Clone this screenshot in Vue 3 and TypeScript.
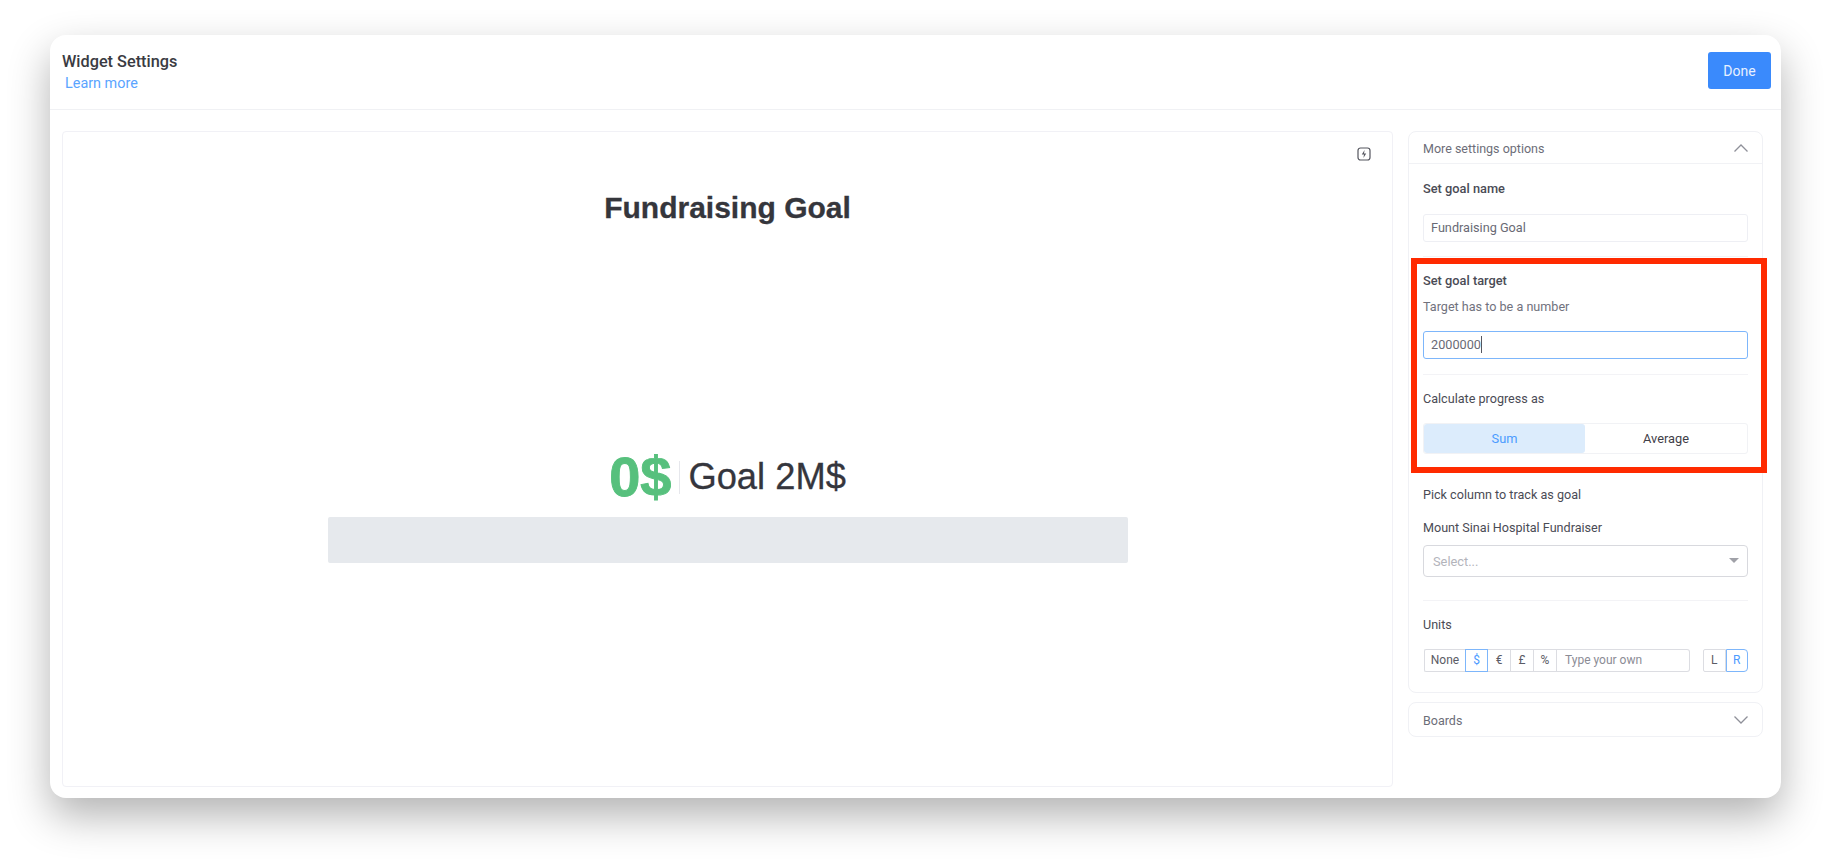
<script setup lang="ts">
const units = ['None', '$', '€', '£', '%']
</script>

<template>
  <div class="page">
    <div class="card">
      <header class="head">
        <div>
          <div class="title">Widget Settings</div>
          <a class="learn">Learn more</a>
        </div>
        <button class="done">Done</button>
      </header>
      <div class="body">
        <section class="canvas">
          <svg class="bolt" viewBox="0 0 14 14" width="14" height="14" fill="none">
            <rect x="1" y="1" width="12" height="12" rx="2.5" stroke="#55565f" stroke-width="1.2" />
            <path d="M7.6 3 4.8 7.4H7L6.4 11l2.800-4.400H7Z" fill="#55565f" />
          </svg>
          <h1 class="goal-name">Fundraising Goal</h1>
          <div class="numbers">
            <span class="current">0$</span>
            <span class="sep"></span>
            <span class="target">Goal 2M$</span>
          </div>
          <div class="bar"></div>
        </section>
        <aside class="side">
          <div class="panel open">
            <div class="panel-head">
              <span class="ph-text">More settings options</span>
              <svg class="chev" viewBox="0 0 16 10" width="16" height="10" fill="none"><path d="M1.5 8.5 8 2l6.500 6.500" stroke="#8f9099" stroke-width="1.300" /></svg>
            </div>
            <div class="panel-body">
              <div class="label first">Set goal name</div>
              <div class="field name">Fundraising Goal</div>
              <hr class="rule r1" />
              <div class="label l2">Set goal target</div>
              <div class="hint">Target has to be a number</div>
              <div class="field focus">2000000<i class="caret"></i></div>
              <hr class="rule r2" />
              <div class="label l3">Calculate progress as</div>
              <div class="toggle">
                <span class="on">Sum</span>
                <span>Average</span>
              </div>
              <div class="label l4">Pick column to track as goal</div>
              <div class="label l5">Mount Sinai Hospital Fundraiser</div>
              <div class="select">
                <span>Select...</span>
                <i class="tri"></i>
              </div>
              <hr class="rule r3" />
              <div class="label l6">Units</div>
              <div class="units">
                <div class="seg">
                  <span v-for="u in units" :key="u" class="u" :class="{ none: u === 'None', sel: u === '$' }">{{ u }}</span>
                  <span class="own">Type your own</span>
                </div>
                <div class="seg lr">
                  <span class="u">L</span>
                  <span class="u sel">R</span>
                </div>
              </div>
            </div>
            <div class="redbox"></div>
          </div>
          <div class="panel boards">
            <div class="panel-head plain">
              <span class="ph-text">Boards</span>
              <svg class="chev" viewBox="0 0 16 10" width="16" height="10" fill="none"><path d="M1.500 1.500 8 8l6.500-6.500" stroke="#8f9099" stroke-width="1.300" /></svg>
            </div>
          </div>
        </aside>
      </div>
    </div>
  </div>
</template>

<style>
html, body { margin: 0; background: #fff; }
</style>

<style scoped>
.page {
  width: 1831px;
  height: 863px;
  padding: 35px 50px 65px;
  box-sizing: border-box;
  overflow: hidden;
  font-family: Roboto, "Liberation Sans", sans-serif;
  color: #3f4048;
}
.card {
  height: 763px;
  background: #fff;
  border-radius: 16px;
  box-shadow: 0 18px 42px rgba(0, 0, 0, 0.3);
  display: flex;
  flex-direction: column;
}
.head {
  flex: none;
  border-bottom: 1px solid #f0f1f4;
  display: flex;
  justify-content: space-between;
  padding: 17px 10px 0 12px;
  height: 57px;
}
.title { font-size: 16.300px; font-weight: 500; line-height: 20px; color: #3a3b42; }
.learn { display: block; margin: 2px 0 0 3px; font-size: 14.400px; line-height: 20px; color: #5aa4ff; }
.done {
  width: 63px;
  height: 37px;
  border: none;
  border-radius: 3px;
  background: #3a8afc;
  color: #e8f1ff;
  font: 400 14px Roboto, sans-serif;
}
.body { flex: 1; display: flex; padding: 21px 18px 11px 12px; gap: 15px; }
.canvas {
  position: relative;
  width: 1331px;
  box-sizing: border-box;
  border: 1px solid #f1f1f6;
  border-radius: 4px;
  display: flex;
  flex-direction: column;
  align-items: center;
}
.bolt { position: absolute; top: 15px; right: 21px; }
.goal-name {
  margin: 59px 0 0;
  font: 700 30px/34px "Liberation Sans", Arial, sans-serif;
  color: #35363c;
  -webkit-text-stroke: 0.3px #35363c;
}
.numbers {
  margin-top: 222px;
  height: 60px;
  display: flex;
  align-items: center;
}
.current { font: 700 56px/60px "Liberation Sans", sans-serif; color: #57c07d; -webkit-text-stroke: 0.9px #57c07d; }
.sep { width: 1px; height: 33px; background: #e6e7ec; margin: 0 8px; }
.target { font: 400 36.300px/60px "Liberation Sans", sans-serif; color: #35363d; -webkit-text-stroke: 0.3px #35363d; }
.bar {
  width: 800px;
  height: 46px;
  margin-top: 10px;
  background: #e6e9ed;
  border-radius: 2px;
}
.side { width: 355px; display: flex; flex-direction: column; gap: 9px; }
.panel {
  position: relative;
  border: 1px solid #f0f1f5;
  border-radius: 8px;
  box-sizing: border-box;
}
.open { height: 562px; }
.boards { height: 35px; }
.panel-head {
  height: 32px;
  border-bottom: 1px solid #f1f2f5;
  box-sizing: border-box;
  padding: 0 13px 0 14px;
  display: flex;
  align-items: center;
  justify-content: space-between;
  font-size: 12.500px;
  color: #6c6d78;
}
.ph-text { margin-top: 2px; }
.panel-head.plain { border: none; height: 33px; }
.panel-body { padding: 0 14px; }
.label { font-size: 12.600px; line-height: 16px; color: #4a4b55; }
.label.first { margin-top: 17px; font-size: 12.800px; font-weight: 500; }
.l2 { margin-top: 16px; font-size: 12.800px; font-weight: 500; }
.hint { margin-top: 10px; font-size: 12.600px; line-height: 16px; color: #71727d; }
.field {
  box-sizing: border-box;
  height: 28px;
  border: 1px solid #eeeff4;
  border-radius: 3px;
  padding: 0 7px;
  font-size: 12.700px;
  line-height: 26px;
  color: #696a75;
}
.name { margin-top: 17px; }
.rule { border: none; border-top: 1px solid #f3f3f6; margin: 0; }
.r1 { margin-top: 14px; }
.focus { margin-top: 16px; height: 28px; border: 1.500px solid #7db6fb; }
.caret { display: inline-block; width: 1px; height: 17px; background: #55565f; vertical-align: -4px; }
.r2 { margin-top: 15px; }
.l3 { margin-top: 16px; }
.toggle {
  display: flex;
  margin-top: 16px;
  height: 31px;
  border: 1px solid #f1f2f5;
  border-radius: 3px;
  box-sizing: border-box;
  font-size: 12.800px;
  line-height: 29px;
  text-align: center;
}
.toggle span { flex: 1; }
.toggle .on { flex: 0 0 161px; background: #dcecfc; color: #4b9bff; border-radius: 3px; }
.l4 { margin-top: 33px; }
.l5 { margin-top: 17px; }
.select {
  margin-top: 9px;
  height: 32px;
  box-sizing: border-box;
  border: 1px solid #d8d9de;
  border-radius: 4px;
  padding: 0 8px 0 9px;
  display: flex;
  align-items: center;
  justify-content: space-between;
  font-size: 12.800px;
  color: #b3b4bb;
}
.tri { width: 0; height: 0; border: 5px solid transparent; border-top: 5px solid #a0a1a8; border-bottom: none; margin-top: -2px; }
.r3 { margin-top: 23px; }
.l6 { margin-top: 16px; }
.units { display: flex; justify-content: space-between; margin-top: 16px; padding-left: 1px; }
.seg { display: flex; height: 23px; font-size: 12px; color: #5b5c66; }
.seg .u {
  width: 23px;
  box-sizing: border-box;
  text-align: center;
  line-height: 21px;
  border: 1px solid #dcdde2;
  border-left-width: 0;
}
.seg .u:first-child { border-left-width: 1px; border-radius: 2px 0 0 2px; }
.seg .none { width: 41px; border-right: none; }
.seg .sel { border: 1.500px solid #7db6fb; color: #4b9bff; line-height: 20px; }
.own {
  width: 133px;
  box-sizing: border-box;
  border: 1px solid #dcdde2;
  border-left: none;
  border-radius: 0 3px 3px 0;
  padding-left: 8px;
  line-height: 21px;
  color: #8b8c95;
}
.lr { width: 45px; }
.lr .u:last-child { border-radius: 0 4px 4px 0; }
.redbox {
  position: absolute;
  left: 2px;
  top: 126px;
  width: 356px;
  height: 215px;
  box-sizing: border-box;
  border: 6px solid #ff2a00;
  pointer-events: none;
}
</style>
